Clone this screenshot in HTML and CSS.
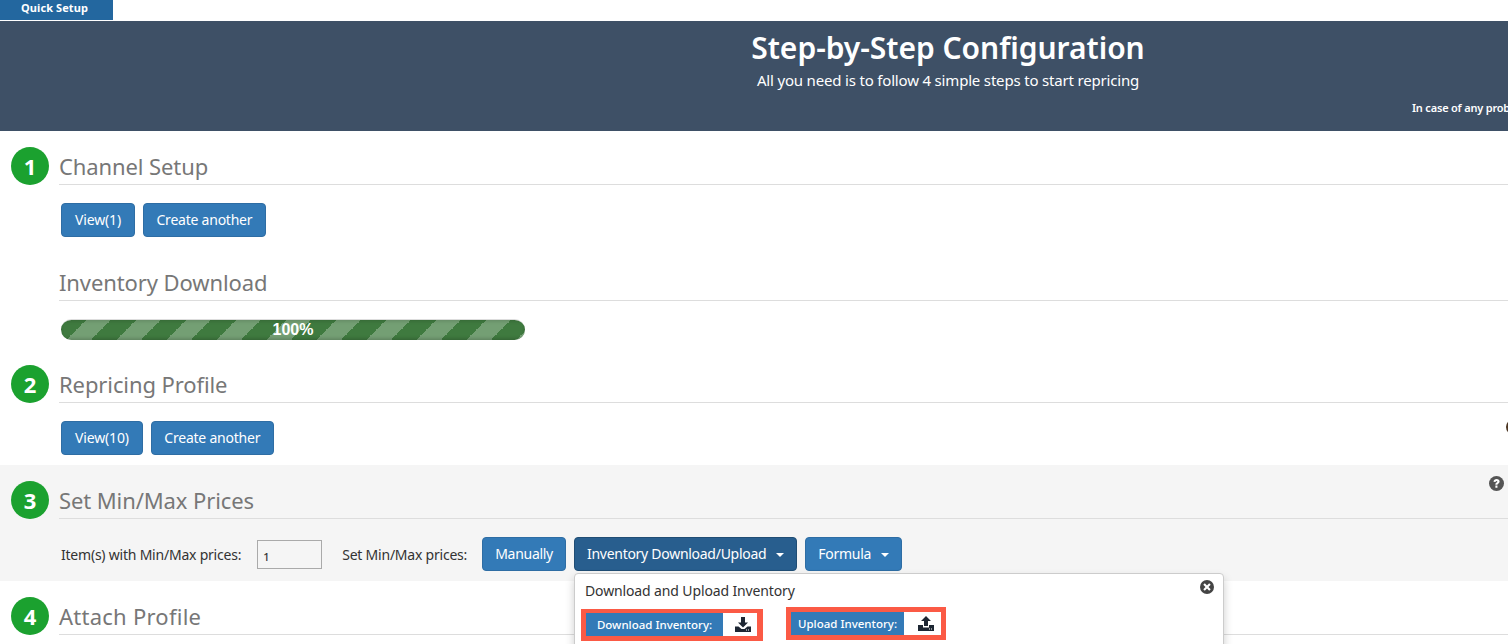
FILE: index.html
```html
<!DOCTYPE html>
<html lang="en">
<head>
<meta charset="utf-8">
<title>Quick Setup</title>
<link rel="stylesheet" href="styles.css">
</head>
<body>
<div class="page">
  <div class="tabs"><a class="tab">Quick Setup</a></div>
  <header class="hero">
    <h1 class="hero-title">Step-by-Step Configuration</h1>
    <p class="hero-sub">All you need is to follow 4 simple steps to start repricing</p>
    <p class="hero-note">In case of any problem, please contact our support team</p>
  </header>

  <section class="step step-first">
    <div class="head"><span class="badge">1</span><h2 class="title">Channel Setup</h2></div>
    <div class="actions"><button class="btn btn-view">View(1)</button><button class="btn btn-create">Create another</button></div>
    <h2 class="title title-sub">Inventory Download</h2>
    <div class="progress"><div class="bar">100%</div></div>
  </section>

  <section class="step">
    <div class="head"><span class="badge">2</span><h2 class="title">Repricing Profile</h2></div>
    <div class="actions"><button class="btn btn-view">View(10)</button><button class="btn btn-create">Create another</button></div>
    <span class="edge-icon"></span>
  </section>

  <section class="step step-grey">
    <div class="head"><span class="badge">3</span><h2 class="title">Set Min/Max Prices</h2></div>
    <div class="actions actions-form">
      <label class="lbl">Item(s) with Min/Max prices:</label>
      <input class="count" value="1">
      <span class="lbl lbl-set">Set Min/Max prices:</span>
      <button class="btn">Manually</button>
      <button class="btn btn-active">Inventory Download/Upload<i class="caret"></i></button>
      <button class="btn">Formula<i class="caret"></i></button>
    </div>
    <svg class="help" viewBox="0 0 16 16"><circle cx="8" cy="8" r="8" fill="#555"/><path d="M4.800 6C5 4.200 6.300 3.200 8.100 3.200c1.900 0 3.200 1.100 3.200 2.700 0 1.200-.7 1.800-1.500 2.300-.6.4-.8.6-.8 1.100H6.800c0-1.200.4-1.800 1.200-2.300.6-.4.9-.6.9-1 0-.5-.4-.8-.9-.8-.6 0-1 .4-1.100 1.100zM6.800 10.200H9V12.600H6.800z" fill="#fff"/></svg>
  </section>

  <section class="step">
    <div class="head"><span class="badge">4</span><h2 class="title title-wide">Attach Profile</h2></div>
  </section>

  <div class="popover">
    <svg class="close" viewBox="0 0 14 14"><circle cx="7" cy="7" r="7" fill="#444"/><path d="M4.800 3.300 7 5.500l2.200-2.200 1.500 1.500L8.500 7l2.200 2.200-1.500 1.500L7 8.500l-2.200 2.200-1.500-1.500L5.500 7 3.300 4.800z" fill="#fff"/></svg>
    <h3 class="pop-title">Download and Upload Inventory</h3>
    <div class="pop-row">
      <div class="hl hl-down">
        <span class="hl-label">Download Inventory:</span>
        <span class="hl-icon"><svg class="tray-icon" viewBox="0 0 16 15"><path d="M6 0h4v5.500h3L8 10.500 3 5.500h3z" fill="#1d2633"/><path d="M0 9.500h3.500L6.500 12h3l3-2.500H16V15H0z" fill="#1d2633"/><path d="M11 12.500h1v1h-1zM13 12.500h1v1h-1z" fill="#fff"/></svg></span>
      </div>
      <div class="hl hl-up">
        <span class="hl-label">Upload Inventory:</span>
        <span class="hl-icon"><svg class="tray-icon" viewBox="0 0 16 15"><path d="M8 0l5 5h-3v5H6V5H3z" fill="#1d2633"/><path d="M0 9h5v2.500h6V9h5v6H0z" fill="#1d2633"/><path d="M11 12.500h1v1h-1zM13 12.500h1v1h-1z" fill="#fff"/></svg></span>
      </div>
    </div>
  </div>
</div>
</body>
</html>
```

FILE: styles.css
```css
html, body {
  margin: 0;
  height: 644px;
  overflow: hidden;
  background: #fff;
}
body {
  font-family: "Noto Sans", sans-serif;
  font-size: 14px;
  color: #333;
}
.page {
  position: relative;
  width: 1896px;
}
.tabs {
  height: 20px;
  margin-bottom: 1px;
}
.tab {
  display: block;
  width: 113px;
  height: 20px;
  line-height: 15px;
  background: #23679f;
  color: #fff;
  font-size: 11px;
  font-weight: 700;
  text-align: center;
  box-sizing: border-box;
  padding-right: 4px;
  letter-spacing: 0.1px;
}
.hero {
  height: 110px;
  background: #3e5066;
  color: #fff;
  text-align: center;
  box-sizing: border-box;
  padding-top: 8px;
  position: relative;
}
.hero-title {
  margin: 0;
  font-size: 30px;
  line-height: 38px;
  font-weight: 600;
  letter-spacing: -0.03px;
}
.hero-sub {
  margin: 2px 0 0;
  font-size: 15px;
  line-height: 22px;
  letter-spacing: -0.18px;
}
.hero-note {
  position: absolute;
  left: 1412px;
  top: 79px;
  margin: 0;
  font-size: 11px;
  line-height: 16px;
  font-weight: 600;
  letter-spacing: -0.2px;
  white-space: nowrap;
}
.step {
  position: relative;
  padding: 16px 0 10px;
}
.step-first {
  padding-bottom: 0;
}
.step-grey {
  background: #f5f5f5;
}
.head {
  display: flex;
  padding-left: 11px;
  gap: 10px;
}
.badge {
  width: 38px;
  height: 38px;
  flex: none;
  border-radius: 50%;
  background: #1ba12f;
  color: #fff;
  font-size: 22px;
  font-weight: 700;
  line-height: 38px;
  text-align: center;
}
.title {
  flex: 1;
  box-sizing: border-box;
  height: 38px;
  margin: 0;
  border-bottom: 1px solid #ddd;
  color: #777;
  font-size: 22px;
  font-weight: 400;
  line-height: 38px;
  letter-spacing: -0.1px;
}
.title-sub {
  margin: 26px 0 0 59px;
}
.title-wide {
  letter-spacing: 0.25px;
}
.actions {
  display: flex;
  align-items: center;
  gap: 8px;
  margin-top: 18px;
  padding-left: 61px;
}
.btn {
  height: 34px;
  box-sizing: border-box;
  padding: 0 12px;
  border: 1px solid #2e6da4;
  border-radius: 4px;
  background: #337ab7;
  color: #fff;
  font-family: inherit;
  font-size: 14px;
  line-height: 20px;
  letter-spacing: -0.28px;
}
.btn-view {
  padding: 0 13px;
  letter-spacing: -0.15px;
}
.btn-create {
  padding: 0 12.5px;
  letter-spacing: -0.23px;
}
.btn-active {
  background: #285e8e;
  border-color: #204d74;
}
.caret {
  display: inline-block;
  width: 0;
  height: 0;
  margin-left: 10px;
  vertical-align: middle;
  border-top: 4px solid #fff;
  border-left: 4px solid transparent;
  border-right: 4px solid transparent;
}
.progress {
  height: 21px;
  width: 464px;
  margin: 18px 0 9px 61px;
  border-radius: 11px;
  overflow: hidden;
  background: #eee;
  box-sizing: border-box;
  border-top: 1px solid #ddd;
}
.bar {
  height: 100%;
  background-color: #3f7a3f;
  background-image: linear-gradient(-45deg, rgba(255,255,255,.28) 25%, transparent 25%, transparent 50%, rgba(255,255,255,.28) 50%, rgba(255,255,255,.28) 75%, transparent 75%, transparent);
  background-size: 50px 50px;
  box-shadow: inset 0 -2px 3px rgba(0,0,0,.15), inset 0 2px 3px rgba(0,0,0,.1);
  color: #fff;
  font-family: "Liberation Sans", sans-serif;
  font-size: 16px;
  font-weight: 700;
  line-height: 20px;
  text-align: center;
}
.edge-icon {
  position: absolute;
  left: 1506px;
  top: 70px;
  width: 16px;
  height: 16px;
  border-radius: 50%;
  background: #4c3522;
}
.actions-form {
  gap: 0;
}
.lbl {
  font-size: 14px;
  letter-spacing: -0.22px;
  color: #333;
}
.count {
  width: 65px;
  height: 29px;
  box-sizing: border-box;
  margin-left: 16px;
  padding: 4px 5px 0;
  border: 1px solid #aaa;
  background: #f5f5f5;
  font-family: inherit;
  font-size: 11px;
  font-weight: 500;
  color: #333;
}
.lbl-set {
  margin-left: 20px;
  margin-right: 15px;
}
.actions-form .btn + .btn {
  margin-left: 8px;
}
.help {
  position: absolute;
  left: 1489px;
  top: 11px;
  width: 15px;
  height: 15px;
}
.popover {
  position: absolute;
  left: 574px;
  top: 573px;
  width: 650px;
  height: 140px;
  box-sizing: border-box;
  background: #fff;
  border: 1px solid #ccc;
  border-radius: 4px;
  box-shadow: 0 5px 10px rgba(0,0,0,.2);
  padding: 8px 10px;
}
.close {
  position: absolute;
  right: 9px;
  top: 6px;
  width: 14px;
  height: 14px;
}
.pop-title {
  margin: 0;
  font-size: 14px;
  font-weight: 400;
  line-height: 18px;
  letter-spacing: -0.13px;
  color: #333;
}
.pop-row {
  display: flex;
  align-items: flex-start;
  margin: 7px 0 0 -4px;
  gap: 23px;
}
.hl {
  display: flex;
  box-sizing: border-box;
  border-style: solid;
  border-color: #fb5a45;
  border-width: 4px 6px 5px 5px;
}
.hl-down {
  width: 182px;
  height: 32px;
  margin-top: 2px;
}
.hl-up {
  width: 160px;
  height: 33px;
  border-width: 5px;
}
.hl-label {
  flex: 1;
  background: #337ab7;
  color: #fff;
  font-size: 11.5px;
  font-weight: 500;
  line-height: 23px;
  text-align: center;
}
.hl-icon {
  width: 34px;
  flex: none;
  display: flex;
  align-items: center;
  justify-content: center;
  padding-left: 5px;
  box-sizing: border-box;
}
.hl-up .hl-icon {
  width: 37px;
  padding-left: 6px;
}
.tray-icon {
  width: 16px;
  height: 15px;
}
```
